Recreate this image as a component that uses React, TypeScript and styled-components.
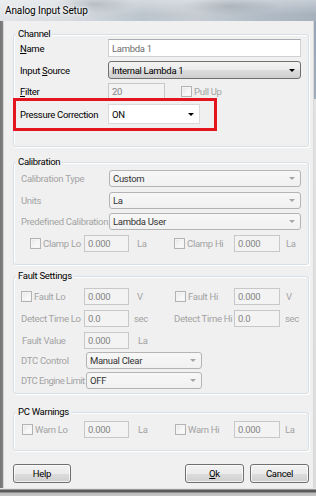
import React from "react";
import styled, { createGlobalStyle, css } from "styled-components";

const GlobalStyle = createGlobalStyle`
  html, body { margin: 0; padding: 0; background: #f0f0f0; }
  * { box-sizing: border-box; }
`;

const Window = styled.div`
  width: 316px;
  height: 496px;
  display: flex;
  flex-direction: column;
  overflow: hidden;
  font-family: Roboto, "Liberation Sans", Arial, sans-serif;
  font-size: 9.5px;
  letter-spacing: -0.3px;
  color: #000;
`;

const TitleBar = styled.div`
  height: 21px;
  flex: none;
  display: flex;
  align-items: center;
  padding: 0 0 1px 5px;
  background:
    radial-gradient(ellipse 40px 10px at 95px 4px, rgba(120, 130, 140, 0.35), rgba(120, 130, 140, 0)),
    radial-gradient(ellipse 50px 9px at 230px 6px, rgba(110, 120, 132, 0.3), rgba(110, 120, 132, 0)),
    linear-gradient(180deg, rgba(255, 255, 255, 0.35), rgba(255, 255, 255, 0) 70%),
    linear-gradient(90deg, #e2e5e8 0%, #d6dbe0 22%, #bcc5cd 45%, #c6ccd2 62%, #b2bcc6 82%, #a6b1bd 100%);
`;

const Title = styled.span`
  font-size: 10px;
  letter-spacing: -0.1px;
  color: #000;
  text-shadow: 0 0 6px #fff, 0 0 3px #fff;
`;

const Middle = styled.div`
  flex: 1;
  display: flex;
  min-height: 0;
`;

const LeftFrame = styled.div`
  width: 4px;
  flex: none;
  background: linear-gradient(90deg, #737373 0, #858585 3px, #d3d3d3 3px, #d3d3d3 4px);
`;

const RightFrame = styled.div`
  width: 3px;
  flex: none;
  border-left: 1px solid #d8d8d8;
  background: linear-gradient(180deg, #97a6b7 0, #9eacbc 78px, #e2e2e2 78px, #dcdcdc 100%);
`;

const BottomFrame = styled.div`
  height: 8px;
  flex: none;
  background: linear-gradient(
    180deg,
    #e4e4e4 0,
    #e4e4e4 1px,
    #9a9a9a 1px,
    #9a9a9a 2px,
    #5a5a5a 2px,
    #5a5a5a 4px,
    #8e8e8e 4px,
    #8e8e8e 5px,
    #bdbdbd 5px,
    #c6c6c6 100%
  );
`;

const Client = styled.div`
  flex: 1;
  background: #f0f0f0;
  padding: 13px 4px 0 9px;
  display: flex;
  flex-direction: column;
`;

const Group = styled.section<{ $mt: number; $pb: number }>`
  margin-top: ${(p) => p.$mt}px;
  padding-bottom: ${(p) => p.$pb}px;
  border: 1px solid #d5dfe5;
  border-radius: 3px;
  box-shadow: inset 1px 1px 0 #fff, 1px 1px 0 #fff;
  display: flex;
  flex-direction: column;
`;

const Caption = styled.div`
  align-self: flex-start;
  height: 12px;
  line-height: 12px;
  margin: -7px 0 -2px 2px;
  padding: 0 2px;
  background: #f0f0f0;
  color: #000;
`;

const Row = styled.div<{ $h: number; $mt: number; $pl: number }>`
  position: relative;
  display: flex;
  align-items: center;
  height: ${(p) => p.$h}px;
  margin-top: ${(p) => p.$mt}px;
  padding-left: ${(p) => p.$pl}px;
`;

const Label = styled.span<{ $w?: number; $muted?: boolean; $pl?: number; $tight?: boolean }>`
  flex: none;
  white-space: nowrap;
  width: ${(p) => (p.$w ? `${p.$w}px` : "auto")};
  padding-left: ${(p) => p.$pl ?? 0}px;
  color: ${(p) => (p.$muted ? "#a3a3a3" : "#000")};
  letter-spacing: ${(p) => (p.$tight ? "-0.55px" : "inherit")};
`;

const Mn = styled.span`
  text-decoration: underline;
  text-underline-offset: 1px;
`;

const TextBox = styled.div<{ $w: number; $h: number; $disabled?: boolean }>`
  flex: none;
  width: ${(p) => p.$w}px;
  height: ${(p) => p.$h}px;
  display: flex;
  align-items: center;
  padding-left: 3px;
  white-space: nowrap;
  ${(p) =>
    p.$disabled
      ? css`
          border: 1px solid #c8c8c8;
          background: #f3f3f3;
          color: #858585;
        `
      : css`
          border: 1px solid #cdd1d6;
          border-top-color: #abadb3;
          background: #fff;
          color: #6d6d6d;
        `}
`;

type ComboVariant = "normal" | "flat" | "disabled";

const comboVariants: Record<ComboVariant, ReturnType<typeof css>> = {
  normal: css`
    border: 1px solid #707070;
    border-radius: 3px;
    background: linear-gradient(180deg, #f3f3f3 0%, #ebebeb 50%, #dddddd 51%, #cfcfcf 100%);
    color: #000;
  `,
  flat: css`
    border: 1px solid #dadada;
    background: #fff;
    color: #000;
  `,
  disabled: css`
    border: 1px solid #b4b4b4;
    border-radius: 3px;
    background: linear-gradient(180deg, #f7f7f7 0%, #f1f1f1 100%);
    color: #333;
  `,
};

const Combo = styled.div<{ $w: number; $h: number; $variant: ComboVariant }>`
  flex: none;
  width: ${(p) => p.$w}px;
  height: ${(p) => p.$h}px;
  display: flex;
  align-items: center;
  justify-content: space-between;
  padding: 0 5px 0 3px;
  white-space: nowrap;
  ${(p) => comboVariants[p.$variant]}
`;

const CheckCell = styled.div<{ $w: number }>`
  flex: none;
  width: ${(p) => p.$w}px;
  display: flex;
  align-items: center;
  gap: 2px;
  white-space: nowrap;
  color: #a3a3a3;
`;

const CheckBox = styled.span`
  flex: none;
  width: 11px;
  height: 11px;
  border: 1px solid #b3b3b3;
  background: linear-gradient(135deg, #e6e6e6 0%, #f7f7f7 60%, #fdfdfd 100%);
  box-shadow: inset 0 0 0 1px #f4f4f4;
`;

const Unit = styled.span<{ $w?: number; $pl: number }>`
  flex: none;
  width: ${(p) => (p.$w ? `${p.$w}px` : "auto")};
  padding-left: ${(p) => p.$pl}px;
  color: #a3a3a3;
  white-space: nowrap;
`;

const Spacer = styled.span<{ $w: number }>`
  flex: none;
  width: ${(p) => p.$w}px;
`;

const Highlight = styled.div`
  position: absolute;
  left: -1px;
  top: -5px;
  width: 204px;
  height: 33px;
  border: 3px solid #e3151e;
  pointer-events: none;
`;

const ButtonBar = styled.div`
  margin-top: 13px;
  display: flex;
  justify-content: space-between;
  align-items: center;
`;

const ButtonGroup = styled.div`
  display: flex;
  gap: 6px;
`;

const Button = styled.button<{ $w: number }>`
  width: ${(p) => p.$w}px;
  height: 19px;
  margin: 0;
  padding: 0;
  font-family: inherit;
  font-size: 9.5px;
  letter-spacing: -0.3px;
  color: #000;
  border: 1px solid #707070;
  border-radius: 3px;
  background: linear-gradient(180deg, #f2f2f2 0%, #ebebeb 50%, #dddddd 51%, #cfcfcf 100%);
  box-shadow: inset 0 0 0 1px rgba(255, 255, 255, 0.7);
`;

const Arrow = ({ color }: { color: string }) => (
  <svg width="6" height="3" viewBox="0 0 6 3" style={{ flex: "none" }}>
    <path d="M0 0H6L3 3Z" fill={color} />
  </svg>
);

const Check = ({ label, w }: { label: string; w: number }) => (
  <CheckCell $w={w}>
    <CheckBox />
    <span>{label}</span>
  </CheckCell>
);

export default function App() {
  return (
    <>
      <GlobalStyle />
      <Window>
        <TitleBar>
          <Title>Analog Input Setup</Title>
        </TitleBar>
        <Middle>
          <LeftFrame />
          <Client>
            <Group $mt={0} $pb={21}>
              <Caption>Channel</Caption>
              <Row $h={20} $mt={0} $pl={6}>
                <Label $w={88}>
                  <Mn>N</Mn>ame
                </Label>
                <TextBox $w={193} $h={18}>
                  Lambda 1
                </TextBox>
              </Row>
              <Row $h={20} $mt={2} $pl={6}>
                <Label $w={88}>
                  Input <Mn>S</Mn>ource
                </Label>
                <Combo $w={193} $h={18} $variant="normal">
                  <span>Internal Lambda 1</span>
                  <Arrow color="#000" />
                </Combo>
              </Row>
              <Row $h={19} $mt={2} $pl={6}>
                <Label $w={88}>
                  <Mn>F</Mn>ilter
                </Label>
                <TextBox $w={57} $h={17} $disabled>
                  20
                </TextBox>
                <Spacer $w={16} />
                <Check label="Pull Up" w={60} />
              </Row>
              <Row $h={22} $mt={2} $pl={6}>
                <Label $w={88}>Pressure Correction</Label>
                <Combo $w={92} $h={20} $variant="flat">
                  <span>ON</span>
                  <Arrow color="#000" />
                </Combo>
                <Highlight />
              </Row>
            </Group>

            <Group $mt={15} $pb={10}>
              <Caption>Calibration</Caption>
              <Row $h={21} $mt={2} $pl={7}>
                <Label $w={88} $muted>
                  Calibration Type
                </Label>
                <Combo $w={192} $h={17} $variant="disabled">
                  <span>Custom</span>
                  <Arrow color="#a6a6a6" />
                </Combo>
              </Row>
              <Row $h={21} $mt={1} $pl={7}>
                <Label $w={88} $muted>
                  Units
                </Label>
                <Combo $w={192} $h={17} $variant="disabled">
                  <span>La</span>
                  <Arrow color="#a6a6a6" />
                </Combo>
              </Row>
              <Row $h={21} $mt={0} $pl={7}>
                <Label $w={88} $muted>
                  Predefined Calibration
                </Label>
                <Combo $w={192} $h={17} $variant="disabled">
                  <span>Lambda User</span>
                  <Arrow color="#a6a6a6" />
                </Combo>
              </Row>
              <Row $h={21} $mt={1} $pl={16}>
                <Check label="Clamp Lo" w={54} />
                <TextBox $w={45} $h={17} $disabled>
                  0.000
                </TextBox>
                <Unit $w={45} $pl={8}>
                  La
                </Unit>
                <Check label="Clamp Hi" w={60} />
                <TextBox $w={46} $h={17} $disabled>
                  0.000
                </TextBox>
                <Unit $pl={6}>La</Unit>
              </Row>
            </Group>

            <Group $mt={11} $pb={4}>
              <Caption>Fault Settings</Caption>
              <Row $h={21} $mt={6} $pl={7}>
                <Check label="Fault Lo" w={63} />
                <TextBox $w={45} $h={17} $disabled>
                  0.000
                </TextBox>
                <Unit $w={46} $pl={8}>
                  V
                </Unit>
                <Check label="Fault Hi" w={59} />
                <TextBox $w={46} $h={17} $disabled>
                  0.000
                </TextBox>
                <Unit $pl={6}>V</Unit>
              </Row>
              <Row $h={21} $mt={1} $pl={7}>
                <Label $w={63} $muted>
                  Detect Time Lo
                </Label>
                <TextBox $w={45} $h={17} $disabled>
                  0.0
                </TextBox>
                <Unit $w={45} $pl={5}>
                  sec
                </Unit>
                <Label $w={60} $muted>
                  Detect Time Hi
                </Label>
                <TextBox $w={46} $h={17} $disabled>
                  0.0
                </TextBox>
                <Unit $pl={5}>sec</Unit>
              </Row>
              <Row $h={21} $mt={1} $pl={7}>
                <Label $w={63} $muted $pl={1}>
                  Fault Value
                </Label>
                <TextBox $w={45} $h={17} $disabled>
                  0.000
                </TextBox>
                <Unit $pl={9}>La</Unit>
              </Row>
              <Row $h={17} $mt={1} $pl={7}>
                <Label $w={65} $muted>
                  DTC Control
                </Label>
                <Combo $w={116} $h={17} $variant="disabled">
                  <span>Manual Clear</span>
                  <Arrow color="#a6a6a6" />
                </Combo>
              </Row>
              <Row $h={17} $mt={3} $pl={7}>
                <Label $w={65} $muted $tight>
                  DTC Engine Limit
                </Label>
                <Combo $w={116} $h={17} $variant="disabled">
                  <span>OFF</span>
                  <Arrow color="#a6a6a6" />
                </Combo>
              </Row>
            </Group>

            <Group $mt={18} $pb={10}>
              <Caption>PC Warnings</Caption>
              <Row $h={21} $mt={3} $pl={8}>
                <Check label="Warn Lo" w={62} />
                <TextBox $w={45} $h={17} $disabled>
                  0.000
                </TextBox>
                <Unit $w={46} $pl={9}>
                  La
                </Unit>
                <Check label="Warn Hi" w={59} />
                <TextBox $w={46} $h={17} $disabled>
                  0.000
                </TextBox>
                <Unit $pl={5}>La</Unit>
              </Row>
            </Group>

            <ButtonBar>
              <Button $w={58}>Help</Button>
              <ButtonGroup>
                <Button $w={59}>
                  <Mn>O</Mn>k
                </Button>
                <Button $w={59}>Cancel</Button>
              </ButtonGroup>
            </ButtonBar>
          </Client>
          <RightFrame />
        </Middle>
        <BottomFrame />
      </Window>
    </>
  );
}
